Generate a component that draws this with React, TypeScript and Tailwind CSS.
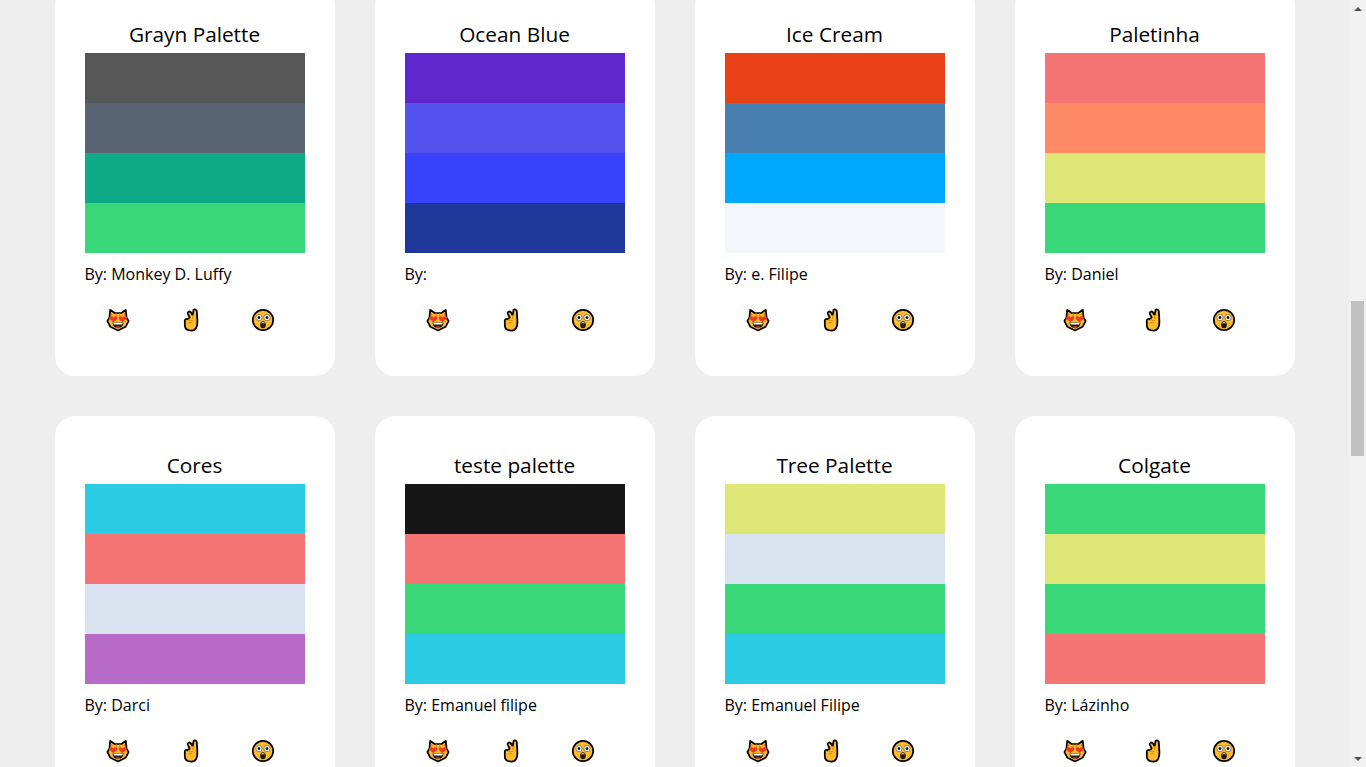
const font = { fontFamily: '"Open Sans", sans-serif' }

interface Palette {
  name: string
  by: string
  colors: string[]
  alt?: boolean
}

const palettes: Palette[] = [
  { name: "Grayn Palette", by: "Monkey D. Luffy", colors: ["bg-[#575757]", "bg-[#596575]", "bg-[#0fab87]", "bg-[#38d87a]"] },
  { name: "Ocean Blue", by: "", colors: ["bg-[#5f27cd]", "bg-[#5352ed]", "bg-[#3742fa]", "bg-[#1e3799]"] },
  { name: "Ice Cream", by: "e. Filipe", colors: ["bg-[#e84118]", "bg-[#487eb0]", "bg-[#00a8ff]", "bg-[#f5f6fa]"] },
  { name: "Paletinha", by: "Daniel", colors: ["bg-[#f57474]", "bg-[#ff8a65]", "bg-[#dee675]", "bg-[#38d87a]"], alt: true },
  { name: "Cores", by: "Darci", colors: ["bg-[#2bcbe6]", "bg-[#f57474]", "bg-[#d9e3ef]", "bg-[#b86ac9]"] },
  { name: "teste palette", by: "Emanuel filipe", colors: ["bg-[#161616]", "bg-[#f57474]", "bg-[#38d87a]", "bg-[#2bcbe6]"] },
  { name: "Tree Palette", by: "Emanuel Filipe", colors: ["bg-[#dee675]", "bg-[#d9e3ef]", "bg-[#38d87a]", "bg-[#2bcbe6]"] },
  { name: "Colgate", by: "Lázinho", colors: ["bg-[#38d87a]", "bg-[#dee675]", "bg-[#38d87a]", "bg-[#f57474]"], alt: true },
]

function CatIcon() {
  return (
    <svg width="24" height="24" viewBox="0 0 24 24" className="shrink-0">
      <path d="M4.2 1.8 L8.6 5 H15.4 L19.8 1.8 L20.6 9.6 L22.6 13 L19.6 18.8 L12 22.4 L4.4 18.8 L1.4 13 L3.4 9.6 Z" fill="#fbb92e" stroke="#000" strokeWidth="1.7" strokeLinejoin="round" />
      <path d="M9.6 5.4 h1.4 v3 h-1.4z M13 5.4 h1.4 v3 h-1.4z M5 4.6 l2 1.6 -2 1.6z M19 4.6 l-2 1.6 2 1.6z" fill="#ee8a1a" />
      <path d="M3 9.6 c2.2-2.2 3.8-1 4.6-.2 c.8-.8 2.4-2 3.8 .2 c.4 1.4-2 3.2-3.8 4.4 c-1.8-1.2-4.8-2.8-4.6-4.4z" fill="#f03a1c" />
      <path d="M21 9.6 c-2.2-2.2-3.8-1-4.6-.2 c-.8-.8-2.4-2-3.8 .2 c-.4 1.4 2 3.2 3.8 4.4 c1.8-1.2 4.8-2.8 4.6-4.4z" fill="#f03a1c" />
      <path d="M6.4 14.6 H17.6 C17.2 18.4 14.8 20.2 12 20.2 C9.2 20.2 6.8 18.4 6.4 14.6Z" fill="#1a1a1a" />
      <path d="M7.2 14.8 H16.8 L16.2 16.6 H7.8Z" fill="#fff" />
      <path d="M9.6 19.2 C10.4 18 13.6 18 14.4 19.2 C13 20 11 20 9.6 19.2Z" fill="#e8452a" />
    </svg>
  )
}

function HandIcon() {
  return (
    <svg width="24" height="24" viewBox="0 0 24 24" className="shrink-0">
      <path d="M14.6 1.8 C15.8 1 17.6 1.6 17.8 3.2 L18.4 13 C18.6 18.4 17 22.6 12.4 22.6 C8.4 22.6 5.8 20.4 5.8 17 L5.8 12.4 C6 11 7.8 10.4 9 11.2 L10.6 9.4 L8.8 5.6 C8.2 3.8 10.6 2.8 11.8 4.2 L13.6 7 Z" fill="#fdbb2b" stroke="#000" strokeWidth="1.8" strokeLinejoin="round" />
      <path d="M9 11.4 C10.4 12.6 12 13 13.8 12.4 M9.2 15.6 C10.2 14.2 12 14 13.2 14.6 M13.6 7 L14 11" fill="none" stroke="#d9890f" strokeWidth="1" />
    </svg>
  )
}

function WowIcon() {
  return (
    <svg width="24" height="24" viewBox="0 0 24 24" className="shrink-0">
      <circle cx="12" cy="12" r="10.2" fill="#fdbb2b" stroke="#000" strokeWidth="1.7" />
      <circle cx="8" cy="9.6" r="3.1" fill="#fff" stroke="#222" strokeWidth=".5" />
      <circle cx="16" cy="9.6" r="3.1" fill="#fff" stroke="#222" strokeWidth=".5" />
      <circle cx="8" cy="9.6" r="1.4" fill="#000" />
      <circle cx="16" cy="9.6" r="1.4" fill="#000" />
      <ellipse cx="12" cy="16.8" rx="2.8" ry="3.5" fill="#1a1a1a" />
      <path d="M9.8 15.2 C10.8 14 13.2 14 14.2 15.2Z" fill="#fff" />
    </svg>
  )
}

function PaletteCard({ palette }: { palette: Palette }) {
  return (
    <div className="bg-white rounded-[20px] h-[391px] px-[30px] pt-[30px]">
      <h2 className="text-[20.8px] leading-[38px] h-[38px] text-center font-medium text-black">{palette.name}</h2>
      <div className="flex flex-col">
        {palette.colors.map((color, i) => (
          <div key={i} className={`h-[50px] ${color}`} />
        ))}
      </div>
      <p className="text-[16px] leading-[22px] mt-[10px] text-black">By: {palette.by}</p>
      {palette.alt ? (
        <div className="flex mt-[23px] ml-[18px]">
          <CatIcon />
          <div className="ml-[54px]"><HandIcon /></div>
          <div className="ml-[47px]"><WowIcon /></div>
        </div>
      ) : (
        <div className="flex mt-[23px] ml-[21px]">
          <CatIcon />
          <div className="ml-[49px]"><HandIcon /></div>
          <div className="ml-[48px]"><WowIcon /></div>
        </div>
      )}
    </div>
  )
}

function Scrollbar() {
  return (
    <div className="w-[17px] shrink-0 bg-[#f1f1f1] flex flex-col items-center">
      <div className="h-[17px] flex items-center justify-center">
        <div className="w-0 h-0 border-x-[4px] border-x-transparent border-b-[4px] border-b-[#505050]" />
      </div>
      <div className="h-[284px]" />
      <div className="w-[13px] h-[155px] bg-[#c1c1c1]" />
      <div className="flex-1" />
      <div className="h-[17px] flex items-center justify-center">
        <div className="w-0 h-0 border-x-[4px] border-x-transparent border-t-[4px] border-t-[#505050]" />
      </div>
    </div>
  )
}

export default function App() {
  return (
    <div className="flex h-screen overflow-hidden bg-[#eeeeee]" style={font}>
      <div className="flex-1 overflow-hidden">
        {/* page is scrolled, first row cut at the top */}
        <div className="grid grid-cols-[repeat(4,280px)] gap-[40px] justify-center -mt-[15px]">
          {palettes.map((p) => (
            <PaletteCard key={p.name} palette={p} />
          ))}
        </div>
      </div>
      <Scrollbar />
    </div>
  )
}
